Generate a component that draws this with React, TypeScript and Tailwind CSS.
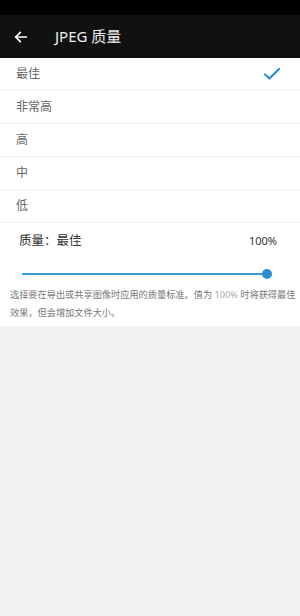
import * as React from 'react';

const options = ['最佳', '非常高', '高', '中', '低'];

export default function App() {
  const [selected, setSelected] = React.useState(0);
  const font = { fontFamily: '"Noto Sans", "Noto Sans CJK SC", sans-serif' };

  return (
    <div className="w-[300px] h-[616px] flex flex-col bg-[#f2f2f2]" style={font}>
      {/* Status bar */}
      <div className="h-[15px] bg-black shrink-0" />

      {/* Header */}
      <div className="h-[43px] bg-[#111111] flex items-center shrink-0">
        <button className="w-[42px] h-full flex items-center justify-center text-white">
          <svg width="16" height="16" viewBox="0 0 24 24" fill="none" stroke="currentColor" strokeWidth="2.6" strokeLinecap="round" strokeLinejoin="round">
            <path d="M20 12H4" />
            <path d="M11 5l-7 7 7 7" />
          </svg>
        </button>
        <h1 className="ml-[13px] text-[15px] text-[#eeeeee]">JPEG 质量</h1>
      </div>

      <div className="bg-white">
        {/* Options */}
        <div className="flex flex-col">
          {options.map((label, i) => (
            <div
              key={label}
              onClick={() => setSelected(i)}
              className="h-[33px] flex items-center justify-between pl-[16px] pr-[19px] border-b border-[#f0f0f0] text-[12px] text-[#666666]"
            >
              <span>{label}</span>
              {selected === i && (
                <svg width="18" height="14" viewBox="0 0 18 14" fill="none" stroke="#2b8fcf" strokeWidth="2.2" strokeLinecap="round" strokeLinejoin="round">
                  <path d="M2 7.5l4.5 4L16 2" />
                </svg>
              )}
            </div>
          ))}
        </div>

        {/* Quality */}
        <div className="h-[33px] flex items-center justify-between pl-[19px] pr-[23px] pt-[2px]">
          <span className="text-[12.5px] leading-[16px] text-[#333333]">质量：最佳</span>
          <span className="text-[11px] leading-[16px] text-[#333333]">100%</span>
        </div>

        {/* Slider */}
        <div className="pt-[17px] pb-[11px] pl-[22px] pr-[32px]">
          <div className="relative h-[2px] bg-[#3a9ad6]">
            <div className="absolute right-[-4px] top-[-4px] w-[10px] h-[10px] rounded-full bg-[#2b8fcf]" />
          </div>
        </div>

        <p className="pl-[10px] pr-[4px] pb-[4px] text-[9.2px] leading-[18px] text-[#777777]">
          选择要在导出或共享图像时应用的质量标准。值为 <span className="text-[#aaaaaa]">100%</span> 时将获得最佳效果，但会增加文件大小。
        </p>
      </div>
    </div>
  );
}
